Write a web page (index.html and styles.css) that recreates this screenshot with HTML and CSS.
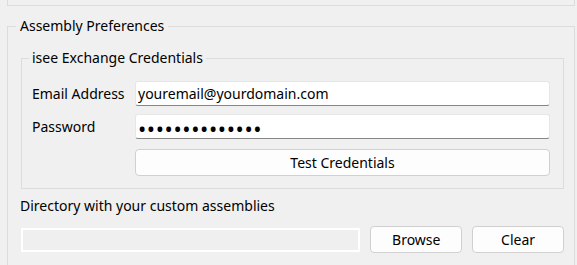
FILE: index.html
```html
<!DOCTYPE html>
<html lang="en">
<head>
  <meta charset="UTF-8" />
  <title>Assembly Preferences</title>
  <link rel="stylesheet" href="styles.css">
</head>
<body>
  <!-- bottom edge of the group above -->
  <div class="prev-group"></div>

  <fieldset class="group">
    <legend>Assembly Preferences</legend>

    <fieldset class="group inner">
      <legend>isee Exchange Credentials</legend>
      <div class="form-grid">
        <label for="email">Email Address</label>
        <input type="text" id="email" class="textbox" value="youremail@yourdomain.com" />
        <label for="password">Password</label>
        <input type="password" id="password" class="textbox pass" value="passwordpasswd" />
        <button class="btn test-btn" type="button">Test Credentials</button>
      </div>
    </fieldset>

    <div class="dir-label">Directory with your custom assemblies</div>
    <div class="dir-row">
      <input type="text" class="dir-box" disabled />
      <button class="btn small" type="button">Browse</button>
      <button class="btn small" type="button">Clear</button>
    </div>
  </fieldset>
</body>
</html>
```

FILE: styles.css
```css
body {
  margin: 0;
  background-color: #f0f0f0;
  font-family: "Noto Sans", sans-serif;
  font-size: 14px;
  color: #000;
  overflow: hidden;
}
.prev-group {
  height: 5px;
  margin: 0 2px 0 7px;
  border: 1px solid #dcdcdc;
  border-top: none;
}
.group {
  margin: 10px 2px 0 7px;
  padding: 12px 10px 0 12px;
  border: 1px solid #dcdcdc;
  min-width: 0;
}
.group legend {
  padding: 0 4px;
  margin-left: -4px;
  line-height: 20px;
}
.inner {
  margin: 0 0 0 1px;
  padding: 13px 13px 12px 10px;
}
.inner legend {
  padding: 0 3px;
  margin-left: -3px;
}
.form-grid {
  display: grid;
  grid-template-columns: 103px 1fr;
  row-gap: 8px;
  align-items: center;
}
.textbox {
  height: 25px;
  box-sizing: border-box;
  border: 1px solid #e6e6e6;
  border-bottom-color: #868686;
  border-radius: 3px;
  background: #fff;
  font: inherit;
  padding: 0 2px;
  outline: none;
}
.pass {
  font-size: 22px;
  letter-spacing: 0.6px;
  padding-top: 2px;
}
.btn {
  height: 27px;
  box-sizing: border-box;
  background: #fdfdfd;
  border: 1px solid #d0d0d0;
  border-radius: 4px;
  font: inherit;
  color: #000;
  padding: 0;
}
.test-btn {
  grid-column: 2;
  margin-top: 2px;
}
.dir-label {
  margin-top: 7px;
  line-height: 20px;
}
.dir-row {
  display: flex;
  align-items: center;
  gap: 10px;
  margin-top: 10px;
  padding-bottom: 20px;
}
.dir-box {
  width: 340px;
  height: 24px;
  box-sizing: border-box;
  margin-left: 1px;
  background: #efefef;
  border: 2px solid #fff;
}
.small {
  width: 92px;
}
```
